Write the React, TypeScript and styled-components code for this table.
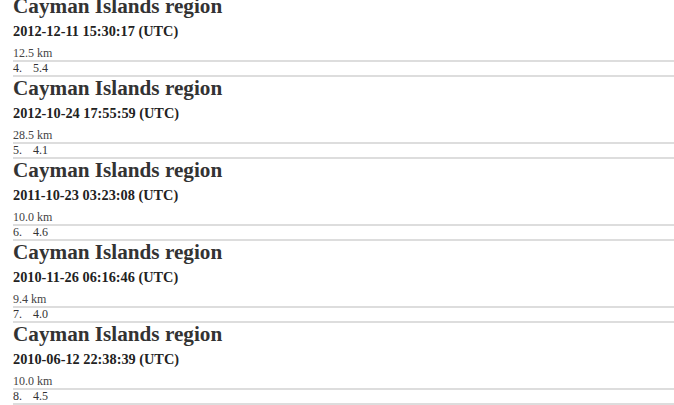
import styled, { createGlobalStyle } from "styled-components";

const GlobalStyle = createGlobalStyle`
	html, body {
		margin: 0;
		padding: 0;
		overflow: hidden;
		background: #fff;
	}
	body {
		font-family: "Liberation Serif", "Times New Roman", serif;
		color: #333;
	}
`;

// the page is scrolled: item 3 starts above the top edge
const List = styled.ol`
	list-style: none;
	margin: -22px 0 0 0;
	padding: 0 0 0 13px;
`;

const Item = styled.li`
	display: flex;
	flex-direction: column;
`;

const Meta = styled.div`
	display: flex;
	font-size: 12px;
	line-height: 13px;
	min-height: 13px;
	color: #333;
	border-top: 2px solid #ddd;
	border-bottom: 2px solid #ddd;
`;

const Rank = styled.span`
	width: 20px;
`;

const Title = styled.h1`
	margin: 0;
	font-size: 21.2px;
	line-height: 22px;
	font-weight: bold;
	color: #333;
`;

const Time = styled.h3`
	margin: 5px 0 0 0;
	font-size: 14.3px;
	line-height: 18px;
	font-weight: bold;
	color: #222;
`;

const Depth = styled.small`
	display: block;
	margin-top: 6px;
	font-size: 12px;
	line-height: 14px;
	color: #444;
`;

type Quake = { rank: number; mag?: string; time?: string; depth?: string };

const quakes: Quake[] = [
	{ rank: 3, time: "2012-12-11 15:30:17", depth: "12.5 km" },
	{ rank: 4, mag: "5.4", time: "2012-10-24 17:55:59", depth: "28.5 km" },
	{ rank: 5, mag: "4.1", time: "2011-10-23 03:23:08", depth: "10.0 km" },
	{ rank: 6, mag: "4.6", time: "2010-11-26 06:16:46", depth: "9.4 km" },
	{ rank: 7, mag: "4.0", time: "2010-06-12 22:38:39", depth: "10.0 km" },
	{ rank: 8, mag: "4.5" },
];

function App() {
	return (
		<>
			<GlobalStyle />
			<List>
				{quakes.map((q) => (
					<Item key={q.rank}>
						<Meta>
							{q.mag && <Rank>{q.rank}.</Rank>}
							{q.mag && <span>{q.mag}</span>}
						</Meta>
						{q.time && <Title>Cayman Islands region</Title>}
						{q.time && <Time>{q.time} (UTC)</Time>}
						{q.depth && <Depth>{q.depth}</Depth>}
					</Item>
				))}
			</List>
		</>
	);
}

export default App;
